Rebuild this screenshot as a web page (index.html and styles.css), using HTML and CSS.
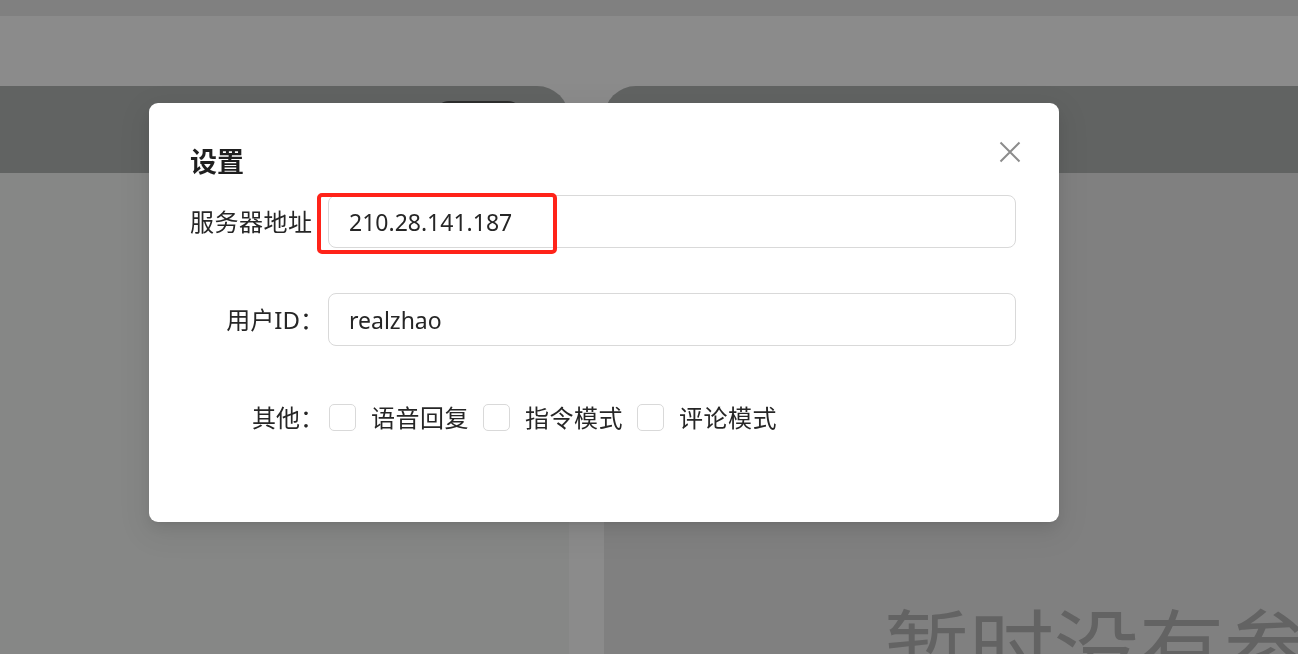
FILE: index.html
```html
<!DOCTYPE html>
<html lang="zh-CN">
<head>
<meta charset="utf-8">
<title>设置</title>
<link rel="stylesheet" href="styles.css">
</head>
<body>
<div class="topbar"></div>
<div class="workspace">
  <section class="panel panel-left">
    <div class="panel-head"><button class="head-btn" type="button"></button></div>
    <div class="panel-body"></div>
  </section>
  <section class="panel panel-right">
    <div class="panel-head"></div>
    <div class="panel-body"><p class="empty">暂时没有参会人员</p></div>
  </section>
</div>

<div class="modal">
  <button class="close" type="button" aria-label="关闭">
    <svg width="22" height="22" viewBox="0 0 22 22"><path d="M1.5 1.5 L20.5 20.5 M20.5 1.5 L1.5 20.5" stroke="#8c8c8c" stroke-width="2" fill="none"/></svg>
  </button>
  <h2 class="title">设置</h2>
  <div class="form">
    <div class="row">
      <div class="label label-long">服务器地址</div>
      <div class="input">210.28.141.187<span class="mark"></span></div>
    </div>
    <div class="row">
      <div class="label">用户ID：</div>
      <div class="input">realzhao</div>
    </div>
    <div class="row">
      <div class="label">其他：</div>
      <div class="checks">
        <label class="check"><span class="box"></span><span class="check-text">语音回复</span></label>
        <label class="check"><span class="box"></span><span class="check-text">指令模式</span></label>
        <label class="check"><span class="box"></span><span class="check-text">评论模式</span></label>
      </div>
    </div>
  </div>
</div>
</body>
</html>
```

FILE: styles.css
```css
html, body {
  margin: 0;
  height: 100%;
  overflow: hidden;
}
body {
  background: #8b8b8b;
  font-family: "Noto Sans", "Noto Sans CJK SC", sans-serif;
  display: flex;
  flex-direction: column;
}
.topbar {
  height: 16px;
  flex: none;
  background: #808080;
}
.workspace {
  flex: 1;
  display: flex;
  gap: 35px;
  padding-top: 70px;
  min-height: 0;
}
.panel {
  display: flex;
  flex-direction: column;
}
.panel-left {
  width: 569px;
  flex: none;
}
.panel-right {
  flex: 1;
  min-width: 0;
  overflow: hidden;
}
.panel-head {
  height: 87px;
  flex: none;
  background: #616362;
  box-sizing: border-box;
}
.panel-left .panel-head {
  border-top-right-radius: 32px;
  display: flex;
  justify-content: flex-end;
  padding: 15px 47px 0 0;
}
.head-btn {
  width: 87px;
  height: 60px;
  background: #2e2f2e;
  border: 0;
  border-radius: 14px;
}
.panel-right .panel-head {
  border-top-left-radius: 32px;
}
.panel-body {
  flex: 1;
}
.panel-left .panel-body {
  background: #868786;
}
.panel-right .panel-body {
  background: #808080;
  padding-left: 280px;
  overflow: hidden;
}
.empty {
  margin: 428px 0 0;
  font-family: "Noto Sans CJK SC", sans-serif;
  font-size: 85px;
  line-height: 1;
  color: #636363;
  white-space: nowrap;
}

.modal {
  position: fixed;
  left: 149px;
  top: 103px;
  width: 910px;
  height: 419px;
  box-sizing: border-box;
  padding: 40px 43px 0 41px;
  background: #fff;
  border-radius: 9px;
  box-shadow: 0 6px 16px 0 rgba(0,0,0,.08), 0 3px 6px -4px rgba(0,0,0,.12), 0 9px 28px 8px rgba(0,0,0,.05);
  color: #262626;
}
.close {
  position: absolute;
  right: 38px;
  top: 38px;
  width: 22px;
  height: 22px;
  padding: 0;
  border: 0;
  background: none;
}
.close svg {
  display: block;
}
.title {
  margin: 0 0 17px;
  font-family: "Noto Sans CJK SC", sans-serif;
  font-size: 27px;
  line-height: 35px;
  font-weight: 700;
  color: #1f1f1f;
}
.form {
  display: flex;
  flex-direction: column;
  gap: 45px;
}
.row {
  display: flex;
  align-items: center;
  height: 53px;
}
.label {
  width: 134px;
  flex: none;
  text-align: right;
  font-size: 24px;
  line-height: 32px;
  white-space: nowrap;
}
.label-long {
  text-align: left;
  letter-spacing: 0.5px;
}
.input {
  position: relative;
  flex: 1;
  height: 53px;
  box-sizing: border-box;
  margin-left: 4px;
  padding: 0 20px;
  border: 1px solid #d9d9d9;
  border-radius: 8px;
  display: flex;
  align-items: center;
  font-size: 23px;
}
.mark {
  position: absolute;
  left: -12px;
  top: -3px;
  width: 240px;
  height: 61px;
  box-sizing: border-box;
  border: 4px solid #ff2319;
  border-radius: 5px;
}
.checks {
  display: flex;
  align-items: center;
  margin-left: 5px;
}
.check {
  display: flex;
  align-items: center;
  margin-right: 14px;
}
.box {
  width: 27px;
  height: 27px;
  box-sizing: border-box;
  border: 1px solid #d9d9d9;
  border-radius: 5px;
}
.check-text {
  margin-left: 15px;
  font-size: 24px;
  line-height: 32px;
  letter-spacing: 0.5px;
}
```
